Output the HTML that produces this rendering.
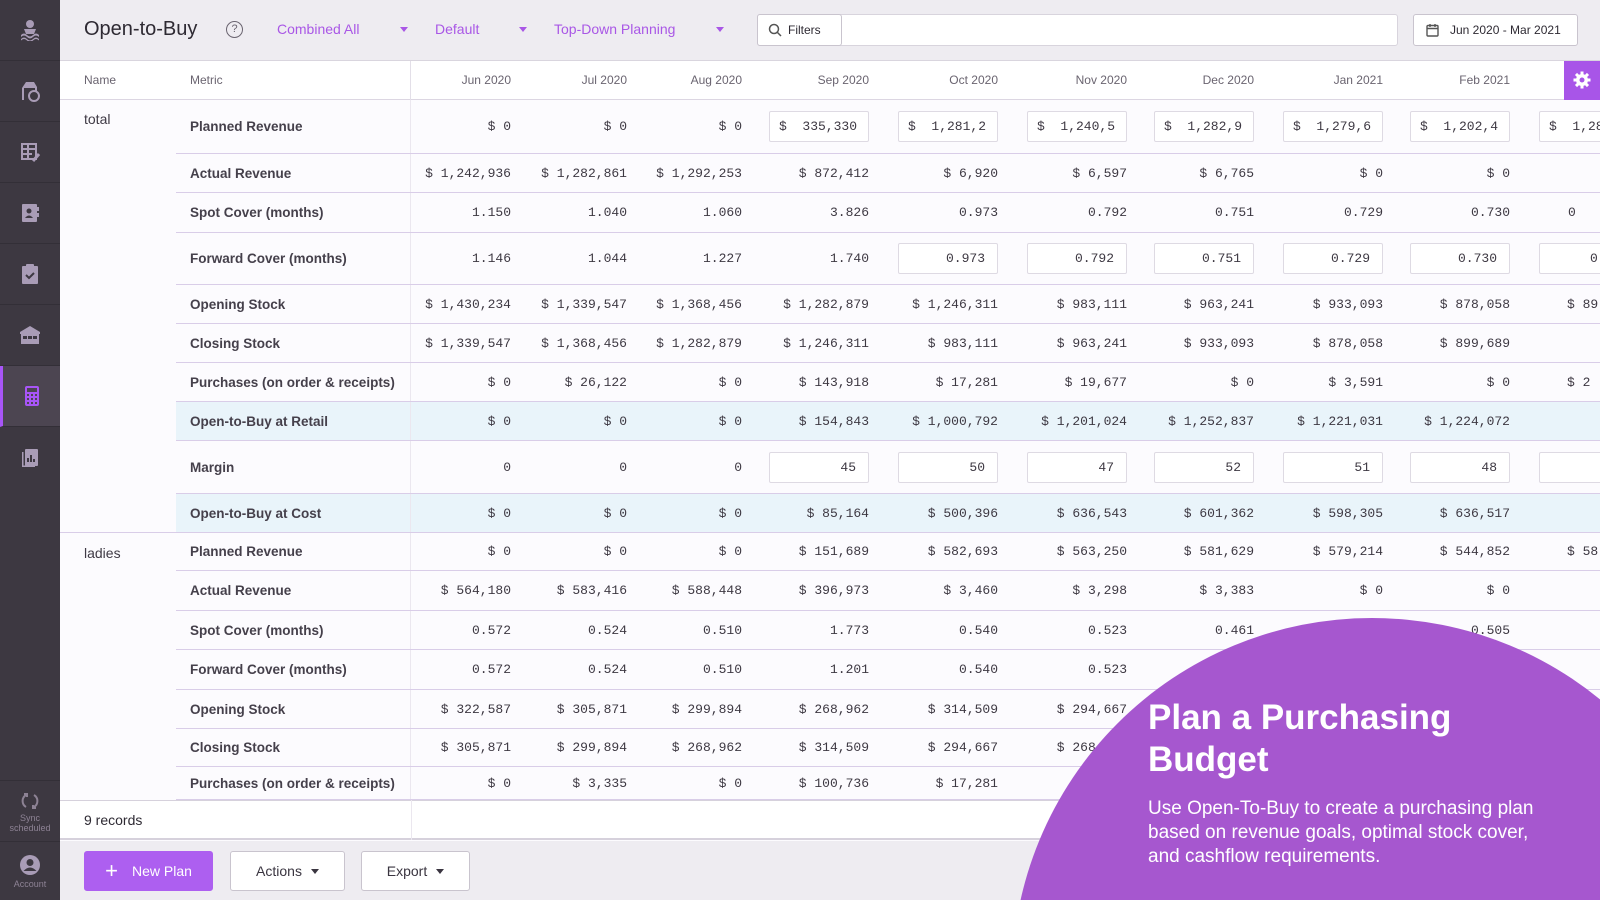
<!DOCTYPE html>
<html><head><meta charset="utf-8"><style>
*{box-sizing:border-box;margin:0;padding:0}
html,body{width:1600px;height:900px;overflow:hidden}
body{position:relative;background:#fcfbfe;font-family:"Liberation Sans",sans-serif;color:#3a3540}
#wrap{position:absolute;left:0;top:0;width:1600px;height:900px;overflow:hidden}
.sb{position:absolute;left:0;top:0;width:60px;height:900px;background:#3d3841}
.sb .it{position:absolute;left:0;width:60px;height:61px;border-bottom:1px solid #332f37;display:flex;align-items:center;justify-content:center}
.sb .act{background:#4c4551;border-left:3px solid #a855f7}
.top{position:absolute;left:60px;top:0;width:1540px;height:61px;background:#eeecf1;border-bottom:1px solid #d9d5de}
.abs{position:absolute}
.dd{position:absolute;top:21px;color:#a957e6;font-size:14px}
.arr{position:absolute;top:27px;width:0;height:0;border-left:4px solid transparent;border-right:4px solid transparent;border-top:5px solid #a957e6}
.hdr{position:absolute;left:60px;top:61px;width:1540px;height:39px;background:#fff;border-bottom:1px solid #dcd6e2;font-size:12px;color:#6a6470}
.row{position:absolute;left:176px;width:1424px;border-bottom:1px solid #d9cde8;display:flex;align-items:center;overflow:hidden}
.row .m{flex:none;width:235px;padding-left:14px;font-size:13.5px;font-weight:bold;color:#45404b;height:100%;display:flex;align-items:center;border-right:1px solid #ebe7ef;white-space:nowrap}
.row .c{text-align:right;font-family:"Liberation Mono",monospace;font-size:13px;color:#3d3842;flex:none;position:relative;white-space:nowrap}
.hl{background:#e9f4fa}
.inp{display:inline-block;width:100px;height:31px;border:1px solid #dedae3;background:#fff;border-radius:2px;line-height:29px;padding:0 12px;text-align:right}
.inp.l{text-align:left;padding-left:9px}
.w1{width:100px}.w2{width:116px}.w3{width:115px}.w4{width:127px}.w5{width:129px}.w6{width:129px}.w7{width:127px}.w8{width:129px}.w9{width:127px}.w10{width:129px}
.hdr .w1,.hdr .w2,.hdr .w3,.hdr .w4,.hdr .w5,.hdr .w6,.hdr .w7,.hdr .w8,.hdr .w9{flex:none}
.btn{position:absolute;top:851px;height:40px;border:1px solid #c9c4ce;border-radius:3px;background:#fff;font-size:14px;color:#3a3540;display:flex;align-items:center;justify-content:center}
.tri{display:inline-block;border-left:4px solid transparent;border-right:4px solid transparent;border-top:5px solid #3a3540;margin-left:9px}
</style></head><body><div id="wrap">

<div class="sb">
 <div class="it" style="top:0"><svg width="22" height="22" viewBox="0 0 22 22" fill="#a99cb6"><circle cx="11" cy="5" r="4"/><path d="M5 10h12l-2 5H7z"/><path d="M2 16q3-3 6 0t6 0t6 0v2q-3-3-6 0t-6 0t-6 0z"/><path d="M2 20q3-3 6 0t6 0t6 0v1.5q-3-3-6 0t-6 0t-6 0z"/></svg></div>
 <div class="it" style="top:61px"><svg width="22" height="22" viewBox="0 0 22 22" fill="#a99cb6"><path d="M3 20V8l4-6h8l3 5v4h-2V8H5v12z"/><circle cx="15" cy="16" r="5" fill="none" stroke="#a99cb6" stroke-width="2"/></svg></div>
 <div class="it" style="top:122px"><svg width="22" height="22" viewBox="0 0 22 22" fill="none" stroke="#a99cb6" stroke-width="2"><rect x="3" y="3" width="14" height="15"/><path d="M3 8h14M3 13h10M9 3v15"/><path d="M14 20l6-7" stroke-width="3"/></svg></div>
 <div class="it" style="top:183px"><svg width="22" height="22" viewBox="0 0 22 22" fill="#a99cb6"><rect x="3" y="2" width="15" height="18" rx="1"/><rect x="18" y="5" width="2" height="4"/><rect x="18" y="11" width="2" height="4"/><circle cx="10" cy="9" r="2.5" fill="#3d3841"/><path d="M6 16q4-5 8 0z" fill="#3d3841"/></svg></div>
 <div class="it" style="top:244px"><svg width="22" height="22" viewBox="0 0 22 22" fill="#a99cb6"><rect x="3" y="3" width="16" height="18" rx="1"/><rect x="7" y="1" width="8" height="4" rx="1"/><path d="M7 12l3 3 5-5" stroke="#3d3841" stroke-width="2" fill="none"/></svg></div>
 <div class="it" style="top:305px"><svg width="24" height="22" viewBox="0 0 24 22" fill="#a99cb6"><path d="M2 8L12 2l10 6v2H2z"/><rect x="3" y="10" width="18" height="10"/><path d="M5 12h4v3H5zM10 12h4v3h-4zM15 12h4v3h-4z" fill="#3d3841"/></svg></div>
 <div class="it act" style="top:366px;width:60px"><svg width="20" height="22" viewBox="0 0 20 22" fill="#a855f7"><rect x="3" y="1" width="14" height="20" rx="2"/><rect x="5" y="3" width="10" height="4" fill="#4c4551"/><g fill="#4c4551"><rect x="5" y="9" width="2" height="2"/><rect x="9" y="9" width="2" height="2"/><rect x="13" y="9" width="2" height="2"/><rect x="5" y="13" width="2" height="2"/><rect x="9" y="13" width="2" height="2"/><rect x="13" y="13" width="2" height="2"/><rect x="5" y="17" width="2" height="2"/><rect x="9" y="17" width="2" height="2"/><rect x="13" y="17" width="2" height="2"/></g></svg></div>
 <div class="it" style="top:427px;border:none"><svg width="22" height="22" viewBox="0 0 22 22" fill="#a99cb6"><rect x="6" y="2" width="13" height="17" rx="1"/><path d="M3 5v15h13v-1.5H4.5V5z"/><path d="M9 15v-4M12 15v-7M15 15v-3" stroke="#3d3841" stroke-width="2"/></svg></div>
 <div class="abs" style="left:0;top:780px;width:60px;height:61px;border-top:1px solid #332f37;text-align:center;color:#8d8294;font-size:9px;line-height:10px"><svg width="20" height="20" viewBox="0 0 20 20" fill="none" stroke="#8d8294" stroke-width="2" style="margin-top:10px"><path d="M6 4a7 7 0 0 0 0 12M14 4a7 7 0 0 1 0 12"/><path d="M4 3h3v3M16 17h-3v-3"/></svg><div>Sync<br>scheduled</div></div>
 <div class="abs" style="left:0;top:841px;width:60px;height:59px;border-top:1px solid #332f37;text-align:center;color:#8d8294;font-size:9px"><svg width="22" height="22" viewBox="0 0 22 22" style="margin-top:12px"><circle cx="11" cy="11" r="10" fill="#a99cb6"/><circle cx="11" cy="8.5" r="3.5" fill="#3d3841"/><path d="M4.5 17q6.5-7 13 0" fill="#3d3841"/></svg><div style="margin-top:1px">Account</div></div>
</div>

<div class="top">
 <div class="abs" style="left:24px;top:18px;font-size:20px;color:#2e2a33">Open-to-Buy</div>
 <div class="abs" style="left:166px;top:21px;width:17px;height:17px;border:1.5px solid #6a6470;border-radius:50%;font-size:11px;text-align:center;line-height:14px;color:#6a6470">?</div>
 <div class="dd" style="left:217px">Combined All</div><div class="arr" style="left:340px"></div>
 <div class="dd" style="left:375px">Default</div><div class="arr" style="left:459px"></div>
 <div class="dd" style="left:494px">Top-Down Planning</div><div class="arr" style="left:656px"></div>
 <div class="abs" style="left:697px;top:14px;width:641px;height:32px;background:#fff;border:1px solid #d8d4dd;border-radius:3px"></div>
 <div class="abs" style="left:697px;top:14px;width:85px;height:32px;border:1px solid #c9c4ce;border-radius:3px;background:#fff;font-size:12px;line-height:30px;padding-left:30px;color:#2e2a33">Filters<svg class="abs" style="left:10px;top:8px" width="14" height="14" viewBox="0 0 14 14" fill="none" stroke="#555" stroke-width="1.5"><circle cx="6" cy="6" r="4.5"/><path d="M9.5 9.5L13 13"/></svg></div>
 <div class="abs" style="left:1353px;top:14px;width:165px;height:32px;border:1px solid #c9c4ce;border-radius:3px;background:#fff;font-size:12px;line-height:30px;padding-left:36px;color:#2e2a33">Jun 2020 - Mar 2021<svg class="abs" style="left:12px;top:8px" width="13" height="14" viewBox="0 0 13 14" fill="none" stroke="#555" stroke-width="1.4"><rect x="1" y="2.5" width="11" height="10.5" rx="1"/><path d="M1 5.5h11M4 1v3M9 1v3"/></svg></div>
</div>

<div class="hdr">
 <div class="abs" style="left:24px;top:12px">Name</div>
 <div class="abs" style="left:130px;top:12px">Metric</div>
 <div class="abs" style="left:350px;top:0;width:1px;height:39px;background:#e3dfe8"></div>
 <div class="abs" style="left:351px;top:12px;display:flex">
  <div class="w1" style="text-align:right">Jun 2020</div><div class="w2" style="text-align:right">Jul 2020</div><div class="w3" style="text-align:right">Aug 2020</div><div class="w4" style="text-align:right">Sep 2020</div><div class="w5" style="text-align:right">Oct 2020</div><div class="w6" style="text-align:right">Nov 2020</div><div class="w7" style="text-align:right">Dec 2020</div><div class="w8" style="text-align:right">Jan 2021</div><div class="w9" style="text-align:right">Feb 2021</div>
 </div>
 <div class="abs" style="left:1504px;top:0;width:36px;height:39px;background:#a855e8"><svg style="margin:10px 9px" width="18" height="18" viewBox="0 0 18 18"><g fill="#fff"><circle cx="9" cy="9" r="6"/><rect x="7.5" y="0.5" width="3" height="17"/><rect x="0.5" y="7.5" width="17" height="3"/><rect x="7.5" y="0.5" width="3" height="17" transform="rotate(45 9 9)"/><rect x="7.5" y="0.5" width="3" height="17" transform="rotate(-45 9 9)"/></g><circle cx="9" cy="9" r="2.5" fill="#a855e8"/></svg></div>
</div>

<div class="abs" style="left:60px;top:100px;width:1540px;height:700px;background:#fcfbfe"></div>
<div class="abs" style="left:84px;top:111px;font-size:14px;color:#3f3a45">total</div>
<div class="abs" style="left:84px;top:545px;font-size:14px;color:#3f3a45">ladies</div>
<div class="abs" style="left:60px;top:532px;width:116px;height:1px;background:#d9cde8"></div>

<div class="row" style="top:100px;height:54px"><div class="m">Planned Revenue</div><div class="c w1">$ 0</div><div class="c w2">$ 0</div><div class="c w3">$ 0</div><div class="c w4"><span class="inp l">$&nbsp;&nbsp;335,330</span></div><div class="c w5"><span class="inp l">$&nbsp;&nbsp;1,281,2</span></div><div class="c w6"><span class="inp l">$&nbsp;&nbsp;1,240,5</span></div><div class="c w7"><span class="inp l">$&nbsp;&nbsp;1,282,9</span></div><div class="c w8"><span class="inp l">$&nbsp;&nbsp;1,279,6</span></div><div class="c w9"><span class="inp l">$&nbsp;&nbsp;1,202,4</span></div><div class="c w10"><span class="inp l">$&nbsp;&nbsp;1,28</span></div></div>
<div class="row" style="top:154px;height:39px"><div class="m">Actual Revenue</div><div class="c w1">$ 1,242,936</div><div class="c w2">$ 1,282,861</div><div class="c w3">$ 1,292,253</div><div class="c w4">$ 872,412</div><div class="c w5">$ 6,920</div><div class="c w6">$ 6,597</div><div class="c w7">$ 6,765</div><div class="c w8">$ 0</div><div class="c w9">$ 0</div></div>
<div class="row" style="top:193px;height:40px"><div class="m">Spot Cover (months)</div><div class="c w1">1.150</div><div class="c w2">1.040</div><div class="c w3">1.060</div><div class="c w4">3.826</div><div class="c w5">0.973</div><div class="c w6">0.792</div><div class="c w7">0.751</div><div class="c w8">0.729</div><div class="c w9">0.730</div><div class="c w10" style="text-align:left;padding-left:58px">0</div></div>
<div class="row" style="top:233px;height:52px"><div class="m">Forward Cover (months)</div><div class="c w1">1.146</div><div class="c w2">1.044</div><div class="c w3">1.227</div><div class="c w4">1.740</div><div class="c w5"><span class="inp">0.973</span></div><div class="c w6"><span class="inp">0.792</span></div><div class="c w7"><span class="inp">0.751</span></div><div class="c w8"><span class="inp">0.729</span></div><div class="c w9"><span class="inp">0.730</span></div><div class="c w10" style="text-align:left"><span class="inp l" style="margin-left:29px;padding-left:50px">0.</span></div></div>
<div class="row" style="top:285px;height:39px"><div class="m">Opening Stock</div><div class="c w1">$ 1,430,234</div><div class="c w2">$ 1,339,547</div><div class="c w3">$ 1,368,456</div><div class="c w4">$ 1,282,879</div><div class="c w5">$ 1,246,311</div><div class="c w6">$ 983,111</div><div class="c w7">$ 963,241</div><div class="c w8">$ 933,093</div><div class="c w9">$ 878,058</div><div class="c w10" style="text-align:left;padding-left:57px">$ 89</div></div>
<div class="row" style="top:324px;height:39px"><div class="m">Closing Stock</div><div class="c w1">$ 1,339,547</div><div class="c w2">$ 1,368,456</div><div class="c w3">$ 1,282,879</div><div class="c w4">$ 1,246,311</div><div class="c w5">$ 983,111</div><div class="c w6">$ 963,241</div><div class="c w7">$ 933,093</div><div class="c w8">$ 878,058</div><div class="c w9">$ 899,689</div></div>
<div class="row" style="top:363px;height:39px"><div class="m">Purchases (on order &amp; receipts)</div><div class="c w1">$ 0</div><div class="c w2">$ 26,122</div><div class="c w3">$ 0</div><div class="c w4">$ 143,918</div><div class="c w5">$ 17,281</div><div class="c w6">$ 19,677</div><div class="c w7">$ 0</div><div class="c w8">$ 3,591</div><div class="c w9">$ 0</div><div class="c w10" style="text-align:left;padding-left:57px">$ 2</div></div>
<div class="row hl" style="top:402px;height:39px"><div class="m">Open-to-Buy at Retail</div><div class="c w1">$ 0</div><div class="c w2">$ 0</div><div class="c w3">$ 0</div><div class="c w4">$ 154,843</div><div class="c w5">$ 1,000,792</div><div class="c w6">$ 1,201,024</div><div class="c w7">$ 1,252,837</div><div class="c w8">$ 1,221,031</div><div class="c w9">$ 1,224,072</div></div>
<div class="row" style="top:441px;height:53px"><div class="m">Margin</div><div class="c w1">0</div><div class="c w2">0</div><div class="c w3">0</div><div class="c w4"><span class="inp">45</span></div><div class="c w5"><span class="inp">50</span></div><div class="c w6"><span class="inp">47</span></div><div class="c w7"><span class="inp">52</span></div><div class="c w8"><span class="inp">51</span></div><div class="c w9"><span class="inp">48</span></div><div class="c w10"><span class="inp">&nbsp;</span></div></div>
<div class="row hl" style="top:494px;height:39px;border-bottom:none"><div class="m">Open-to-Buy at Cost</div><div class="c w1">$ 0</div><div class="c w2">$ 0</div><div class="c w3">$ 0</div><div class="c w4">$ 85,164</div><div class="c w5">$ 500,396</div><div class="c w6">$ 636,543</div><div class="c w7">$ 601,362</div><div class="c w8">$ 598,305</div><div class="c w9">$ 636,517</div></div>
<div class="abs" style="left:176px;top:532px;width:1424px;height:1px;background:#d9cde8"></div>

<div class="row" style="top:533px;height:38px"><div class="m">Planned Revenue</div><div class="c w1">$ 0</div><div class="c w2">$ 0</div><div class="c w3">$ 0</div><div class="c w4">$ 151,689</div><div class="c w5">$ 582,693</div><div class="c w6">$ 563,250</div><div class="c w7">$ 581,629</div><div class="c w8">$ 579,214</div><div class="c w9">$ 544,852</div><div class="c w10" style="text-align:left;padding-left:57px">$ 58</div></div>
<div class="row" style="top:571px;height:40px"><div class="m">Actual Revenue</div><div class="c w1">$ 564,180</div><div class="c w2">$ 583,416</div><div class="c w3">$ 588,448</div><div class="c w4">$ 396,973</div><div class="c w5">$ 3,460</div><div class="c w6">$ 3,298</div><div class="c w7">$ 3,383</div><div class="c w8">$ 0</div><div class="c w9">$ 0</div></div>
<div class="row" style="top:611px;height:39px"><div class="m">Spot Cover (months)</div><div class="c w1">0.572</div><div class="c w2">0.524</div><div class="c w3">0.510</div><div class="c w4">1.773</div><div class="c w5">0.540</div><div class="c w6">0.523</div><div class="c w7">0.461</div><div class="c w8">0.492</div><div class="c w9">0.505</div></div>
<div class="row" style="top:650px;height:40px"><div class="m">Forward Cover (months)</div><div class="c w1">0.572</div><div class="c w2">0.524</div><div class="c w3">0.510</div><div class="c w4">1.201</div><div class="c w5">0.540</div><div class="c w6">0.523</div><div class="c w7">0.461</div><div class="c w8">0.492</div><div class="c w9">0.505</div></div>
<div class="row" style="top:690px;height:39px"><div class="m">Opening Stock</div><div class="c w1">$ 322,587</div><div class="c w2">$ 305,871</div><div class="c w3">$ 299,894</div><div class="c w4">$ 268,962</div><div class="c w5">$ 314,509</div><div class="c w6">$ 294,667</div><div class="c w7">$ 268,962</div><div class="c w8">$ 268,962</div><div class="c w9">$ 268,962</div><div class="c w10" style="text-align:left;padding-left:57px">$ 26</div></div>
<div class="row" style="top:729px;height:38px"><div class="m">Closing Stock</div><div class="c w1">$ 305,871</div><div class="c w2">$ 299,894</div><div class="c w3">$ 268,962</div><div class="c w4">$ 314,509</div><div class="c w5">$ 294,667</div><div class="c w6">$ 268,962</div></div>
<div class="row" style="top:767px;height:33px"><div class="m">Purchases (on order &amp; receipts)</div><div class="c w1">$ 0</div><div class="c w2">$ 3,335</div><div class="c w3">$ 0</div><div class="c w4">$ 100,736</div><div class="c w5">$ 17,281</div></div>

<div class="abs" style="left:60px;top:800px;width:1540px;height:40px;background:#fff;border-top:1px solid #d6d1dc;border-bottom:2px solid #d6d1dc"></div>
<div class="abs" style="left:411px;top:800px;width:1px;height:40px;background:#ebe7ef"></div>
<div class="abs" style="left:84px;top:812px;font-size:14px;color:#2e2a33">9 records</div>
<div class="abs" style="left:60px;top:841px;width:1540px;height:59px;background:#eeecf1"></div>
<div class="btn" style="left:84px;width:129px;background:#ad5ff0;border-color:#ad5ff0;color:#fff"><span style="font-size:22px;margin-right:14px;line-height:20px">+</span>New Plan</div>
<div class="btn" style="left:230px;width:115px">Actions<span class="tri"></span></div>
<div class="btn" style="left:361px;width:109px">Export<span class="tri"></span></div>

<div class="abs" style="left:1000px;top:610px;width:600px;height:290px;overflow:hidden">
 <div class="abs" style="left:12px;top:8px;width:720px;height:720px;border-radius:50%;background:#a657cf"></div>
</div>
<div class="abs" style="left:1148px;top:697px;font-size:35px;font-weight:bold;color:#fff;line-height:42px">Plan a Purchasing<br>Budget</div>
<div class="abs" style="left:1148px;top:797px;font-size:19px;color:#fff;line-height:24px;width:415px">Use Open-To-Buy to create a purchasing plan based on revenue goals, optimal stock cover, and cashflow requirements.</div>
</div></body></html>
